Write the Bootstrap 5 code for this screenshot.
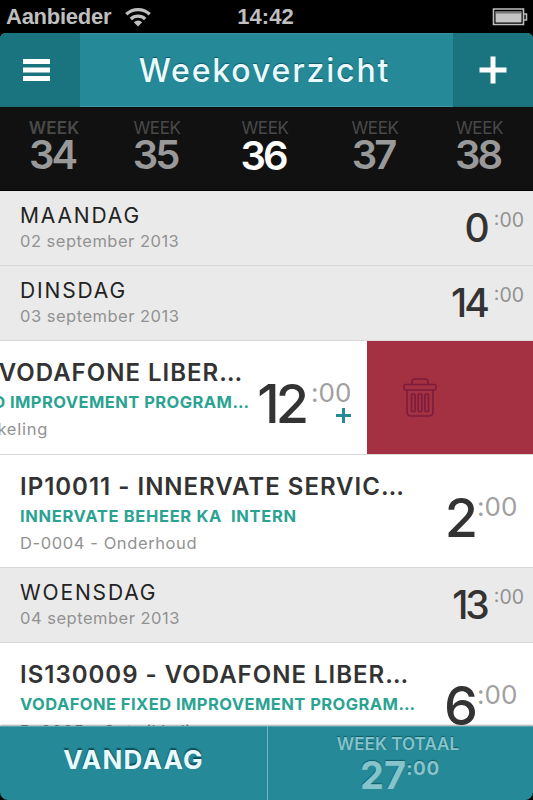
<!DOCTYPE html>
<html lang="nl">
<head>
<meta charset="utf-8">
<meta name="viewport" content="width=device-width, initial-scale=1">
<title>Weekoverzicht</title>
<link href="https://cdn.jsdelivr.net/npm/bootstrap@5.3.0/dist/css/bootstrap.min.css" rel="stylesheet">
<style>
body{background:#000;font-family:Inter,"Liberation Sans",sans-serif;color:#333;white-space:nowrap}
.app{width:533px;height:800px}
/* status bar */
.status{height:33px;font:700 22px/34px "Liberation Sans",Arial,sans-serif;color:#bfbfbf;padding:0 5px 0 6px}
.status .side-col{flex:1 1 0}
.status .clock{margin-left:-3px}
.status .carrier{letter-spacing:-.25px}
.status .wifi{margin-left:14px}
/* title bar */
.topbar{height:74px;background:#258997;border-radius:6px 6px 0 0;box-shadow:inset 0 1px #3b929e,inset 0 -1px #3f97a3}
.topbar .side-btn{width:80px;background:#19747f;border:0;border-radius:0;padding:0;box-shadow:inset 0 -1px #226c76}
.topbar .menu-btn{padding-left:23px}
.topbar h1{font-size:32px;font-weight:500;letter-spacing:1.85px;line-height:76px;color:#e9fbff;text-shadow:0 -1px 1px rgba(0,60,70,.6);padding-right:4px}
/* week picker */
.weeks{height:84px;background:#111;border-bottom:1px solid #000;display:grid;grid-template-columns:108px 98px 118px 102px 107px;text-align:center;padding-top:11px}
.weeks a{color:#999;text-decoration:none}
.week-label{font-size:17px;line-height:20px;color:#494949;letter-spacing:-.35px}
.week-no{font-size:40px;line-height:34px;font-weight:600;letter-spacing:-3px;padding-top:0;margin-left:-4px}
.weeks .current .week-no{color:#fff;padding-top:1px}
.weeks .first .week-label{font-weight:600;letter-spacing:.2px}
/* day rows */
.day-row{height:75px;background:#eaeaea;border-bottom:1px solid #d8d8d8;padding:12px 9px 0 20px;flex:none}
.day-name{font-size:21px;line-height:25px;color:#222;letter-spacing:1.85px}
.day-date{font-size:16.5px;line-height:26px;color:#929292;letter-spacing:.5px}
.day-row .hrs{font-size:39px;font-weight:500;line-height:50px;letter-spacing:-3px;margin-right:7px}
.day-row .mins{font-size:19.5px;line-height:34px;color:#929292}
/* booking rows */
.item-row{background:#fff;border-bottom:1px solid #d8d8d8;flex:none;height:113px}
.item-body{width:533px;flex:none;padding:19px 14px 0 20px}
.item-name{font-size:24px;font-weight:600;line-height:26px;letter-spacing:1px}
.item-proj{font-size:16.5px;font-weight:700;line-height:32px;letter-spacing:.45px;color:#2ba393;white-space:pre}
.item-proj.wide{letter-spacing:.66px}
.item-task{font-size:16.5px;line-height:22px;letter-spacing:.6px;color:#929292}
.swiped .item-task{letter-spacing:.75px}
.item-row .hrs{font-size:54px;font-weight:500;line-height:87px;letter-spacing:-4px;margin-right:3px}
.item-row .hrs.pair{margin-right:6px}
.item-row .mins{font-size:26px;line-height:65px;color:#a0a0a0;letter-spacing:.1px}
.mins-col{width:42px;display:flex;flex-direction:column}
.mins-col svg{margin:-17px 0 0 25px}
.swiped{height:114px}
.swiped .item-body{margin-left:-166px}
.remove{width:166px;background:#a33141;padding:0 0 0 36px;border:0}
/* bottom bar */
.footer-wrap{background:#000;position:relative}
.bottom{height:74px;background:#258997;border-radius:0 0 8px 8px;box-shadow:inset 0 1px #55a5af,0 -1px 2px rgba(0,0,0,.35)}
.today{width:268px;border-right:1px solid #6fb3bb;color:#e9fbff;font-size:26px;font-weight:700;letter-spacing:1.25px;line-height:68px;text-shadow:0 -2px 1px rgba(0,50,60,.65)}
.total{color:#86c4cc;font-weight:700;text-shadow:0 -1px 1px rgba(0,60,70,.6);padding:7px 5px 0 0}
.total-label{font-size:17px;line-height:23px;font-weight:600;letter-spacing:.05px}
.total .sum-line{padding-left:4px}
.total .sum{font-size:38px;line-height:38px}
.total .mins{font-size:19px;line-height:25px;letter-spacing:.6px}
</style>
</head>
<body>
<div class="app d-flex flex-column overflow-hidden">
  <div class="status d-flex flex-shrink-0">
    <div class="side-col d-flex align-items-center"><span class="carrier">Aanbieder</span>
      <svg class="wifi" width="26" height="21" viewBox="0 0 26 21" fill="none" stroke="#bfbfbf" stroke-width="3.3"><path d="M1.3 8.2a17 17 0 0 1 23.4 0M5.8 13a10.5 10.5 0 0 1 14.4 0"/><path d="M8.8 16.2a6 6 0 0 1 8.4 0L13 20.4z" fill="#bfbfbf" stroke="none"/></svg>
    </div>
    <div class="clock">14:42</div>
    <div class="side-col d-flex align-items-center justify-content-end">
      <svg width="36" height="18" viewBox="0 0 36 18"><path d="M1.5 1h30v15.500h-30z" fill="none" stroke="#bfbfbf" stroke-width="1.600"/><path d="M3.500 3.500h26v11h-26z" fill="#c4c4c4"/><path d="M3.500 3.500h26v2h-26z" fill="#777"/><path d="M32 6h2.500v6H32" fill="none" stroke="#bfbfbf" stroke-width="1.500"/></svg>
    </div>
  </div>

  <header class="topbar d-flex flex-shrink-0 overflow-hidden">
    <button class="side-btn menu-btn btn d-flex align-items-center" aria-label="Menu">
      <svg width="27" height="22" viewBox="0 0 27 22" fill="#fff"><path d="M0 0h27v5H0zM0 8.500h27v5H0zM0 17h27v5H0z"/></svg>
    </button>
    <h1 class="flex-fill text-center mb-0">Weekoverzicht</h1>
    <button class="side-btn btn d-flex align-items-center justify-content-center" aria-label="Toevoegen">
      <svg width="28" height="28" viewBox="0 0 28 28" fill="none" stroke="#fff" stroke-width="5"><path d="M14 .5v27M.5 14h27"/></svg>
    </button>
  </header>

  <nav class="weeks flex-shrink-0">
    <a href="#" class="first"><div class="week-label">WEEK</div><div class="week-no">34</div></a>
    <a href="#"><div class="week-label">WEEK</div><div class="week-no">35</div></a>
    <a href="#" class="current"><div class="week-label">WEEK</div><div class="week-no">36</div></a>
    <a href="#"><div class="week-label">WEEK</div><div class="week-no">37</div></a>
    <a href="#"><div class="week-label">WEEK</div><div class="week-no">38</div></a>
  </nav>

  <main class="d-flex flex-column flex-fill overflow-hidden bg-white">
    <div class="day-row d-flex">
      <div class="flex-fill"><div class="day-name">MAANDAG</div><div class="day-date">02 september 2013</div></div>
      <div class="hrs">0</div><div class="mins">:00</div>
    </div>
    <div class="day-row d-flex">
      <div class="flex-fill"><div class="day-name">DINSDAG</div><div class="day-date">03 september 2013</div></div>
      <div class="hrs">14</div><div class="mins">:00</div>
    </div>
    <div class="item-row swiped d-flex">
      <div class="item-body d-flex">
        <div class="flex-fill"><div class="item-name">IS130009 - VODAFONE LIBER…</div><div class="item-proj">VODAFONE FIXED IMPROVEMENT PROGRAM…</div><div class="item-task">D-0005 - Ontwikkeling</div></div>
        <div class="hrs pair">12</div>
        <div class="mins-col"><div class="mins">:00</div><svg width="15" height="15" viewBox="0 0 15 15" fill="none" stroke="#258997" stroke-width="3"><path d="M7.500 0v15M0 7.500h15"/></svg></div>
      </div>
      <button class="remove btn rounded-0 d-flex align-items-center" aria-label="Verwijderen">
        <svg width="34" height="39" viewBox="0 0 34 39" fill="none" stroke="#7d1b3d" stroke-width="1.600" stroke-linejoin="round"><path d="M9 6.500V4q0-3 3-3h10q3 0 3 3v2.500"/><rect x="1" y="6.500" width="32" height="5.500" rx="2"/><path d="M4 12v22q0 4 4 4h18q4 0 4-4V12"/><rect x="8.500" y="16" width="3.600" height="17.500" rx="1"/><rect x="15.200" y="16" width="3.600" height="17.500" rx="1"/><rect x="21.900" y="16" width="3.600" height="17.500" rx="1"/></svg>
      </button>
    </div>
    <div class="item-row d-flex">
      <div class="item-body d-flex">
        <div class="flex-fill"><div class="item-name">IP10011 - INNERVATE SERVIC…</div><div class="item-proj wide">INNERVATE BEHEER KA  INTERN</div><div class="item-task">D-0004 - Onderhoud</div></div>
        <div class="hrs">2</div>
        <div class="mins-col"><div class="mins">:00</div></div>
      </div>
    </div>
    <div class="day-row d-flex">
      <div class="flex-fill"><div class="day-name">WOENSDAG</div><div class="day-date">04 september 2013</div></div>
      <div class="hrs">13</div><div class="mins">:00</div>
    </div>
    <div class="item-row d-flex">
      <div class="item-body d-flex">
        <div class="flex-fill"><div class="item-name">IS130009 - VODAFONE LIBER…</div><div class="item-proj">VODAFONE FIXED IMPROVEMENT PROGRAM…</div><div class="item-task">D-0005 - Ontwikkeling</div></div>
        <div class="hrs">6</div>
        <div class="mins-col"><div class="mins">:00</div></div>
      </div>
    </div>
  </main>

  <div class="footer-wrap flex-shrink-0">
    <footer class="bottom d-flex">
      <div class="today text-center">VANDAAG</div>
      <div class="total flex-fill text-center">
        <div class="total-label">WEEK TOTAAL</div>
        <div class="sum-line d-flex justify-content-center"><div class="sum">27</div><div class="mins">:00</div></div>
      </div>
    </footer>
  </div>
</div>
<script src="https://cdn.jsdelivr.net/npm/bootstrap@5.3.0/dist/js/bootstrap.bundle.min.js"></script>
</body>
</html>
